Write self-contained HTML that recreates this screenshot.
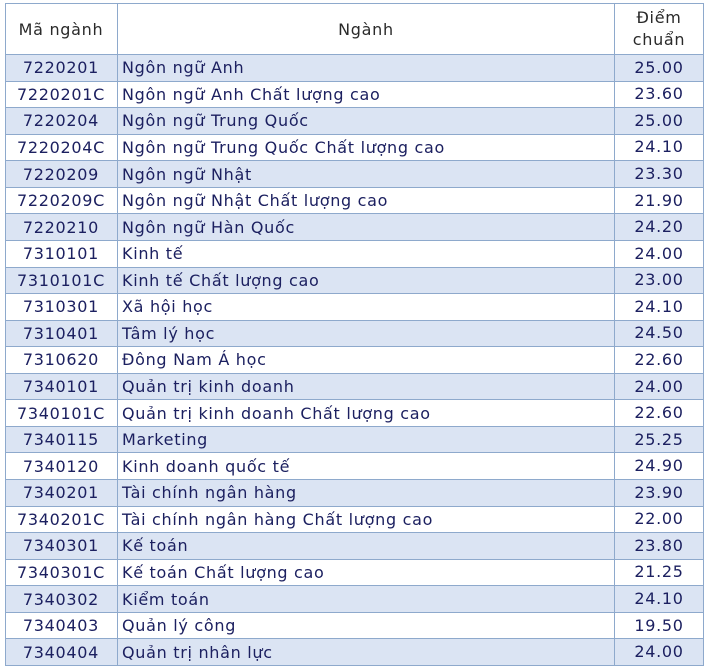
<!DOCTYPE html><html><head><meta charset="utf-8"><style>
body{margin:0;background:#fff;width:708px;height:645px;overflow:hidden;font-family:"DejaVu Sans",Verdana,sans-serif;font-size:16px;letter-spacing:0.7px;}
.t{position:absolute;left:5px;top:3px;width:697px;border:1px solid #8ea9cc;border-bottom:none;}
.h{height:50px;position:relative;border-bottom:1px solid #8ea9cc;color:#2a2a2a;}
.r{height:25.57px;position:relative;border-bottom:1px solid #8ea9cc;color:#1c2060;}
.r:nth-child(even){background:#dbe4f3}
.c{position:absolute;top:0;bottom:0;display:flex;align-items:center;white-space:nowrap}
.a{left:0;width:110px;justify-content:center;}
.b{left:111px;width:498px;border-left:1px solid #8ea9cc;border-right:1px solid #8ea9cc;padding-left:4px;box-sizing:border-box}
.h .b{justify-content:center;padding:0}
.d{left:610px;width:86px;justify-content:center;text-align:center;line-height:22px}
</style></head><body><div class="t">
<div class="h"><div class="c a">Mã ngành</div><div class="c b">Ngành</div><div class="c d">Điểm<br>chuẩn</div></div>
<div class="r"><div class="c a">7220201</div><div class="c b">Ngôn ngữ Anh</div><div class="c d">25.00</div></div>
<div class="r"><div class="c a">7220201C</div><div class="c b">Ngôn ngữ Anh Chất lượng cao</div><div class="c d">23.60</div></div>
<div class="r"><div class="c a">7220204</div><div class="c b">Ngôn ngữ Trung Quốc</div><div class="c d">25.00</div></div>
<div class="r"><div class="c a">7220204C</div><div class="c b">Ngôn ngữ Trung Quốc Chất lượng cao</div><div class="c d">24.10</div></div>
<div class="r"><div class="c a">7220209</div><div class="c b">Ngôn ngữ Nhật</div><div class="c d">23.30</div></div>
<div class="r"><div class="c a">7220209C</div><div class="c b">Ngôn ngữ Nhật Chất lượng cao</div><div class="c d">21.90</div></div>
<div class="r"><div class="c a">7220210</div><div class="c b">Ngôn ngữ Hàn Quốc</div><div class="c d">24.20</div></div>
<div class="r"><div class="c a">7310101</div><div class="c b">Kinh tế</div><div class="c d">24.00</div></div>
<div class="r"><div class="c a">7310101C</div><div class="c b">Kinh tế Chất lượng cao</div><div class="c d">23.00</div></div>
<div class="r"><div class="c a">7310301</div><div class="c b">Xã hội học</div><div class="c d">24.10</div></div>
<div class="r"><div class="c a">7310401</div><div class="c b">Tâm lý học</div><div class="c d">24.50</div></div>
<div class="r"><div class="c a">7310620</div><div class="c b">Đông Nam Á học</div><div class="c d">22.60</div></div>
<div class="r"><div class="c a">7340101</div><div class="c b">Quản trị kinh doanh</div><div class="c d">24.00</div></div>
<div class="r"><div class="c a">7340101C</div><div class="c b">Quản trị kinh doanh Chất lượng cao</div><div class="c d">22.60</div></div>
<div class="r"><div class="c a">7340115</div><div class="c b">Marketing</div><div class="c d">25.25</div></div>
<div class="r"><div class="c a">7340120</div><div class="c b">Kinh doanh quốc tế</div><div class="c d">24.90</div></div>
<div class="r"><div class="c a">7340201</div><div class="c b">Tài chính ngân hàng</div><div class="c d">23.90</div></div>
<div class="r"><div class="c a">7340201C</div><div class="c b">Tài chính ngân hàng Chất lượng cao</div><div class="c d">22.00</div></div>
<div class="r"><div class="c a">7340301</div><div class="c b">Kế toán</div><div class="c d">23.80</div></div>
<div class="r"><div class="c a">7340301C</div><div class="c b">Kế toán Chất lượng cao</div><div class="c d">21.25</div></div>
<div class="r"><div class="c a">7340302</div><div class="c b">Kiểm toán</div><div class="c d">24.10</div></div>
<div class="r"><div class="c a">7340403</div><div class="c b">Quản lý công</div><div class="c d">19.50</div></div>
<div class="r"><div class="c a">7340404</div><div class="c b">Quản trị nhân lực</div><div class="c d">24.00</div></div>
</div></body></html>
